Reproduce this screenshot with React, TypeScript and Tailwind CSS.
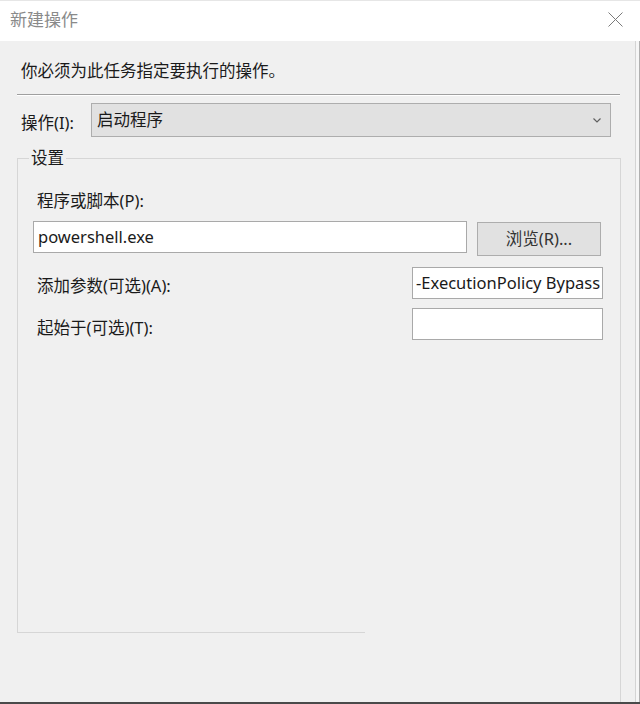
import React from "react";

const FONT = {
  fontFamily: '"Noto Sans", "Noto Sans CJK SC", sans-serif',
};

export default function App() {
  return (
    <div
      className="w-[640px] h-[704px] bg-white flex flex-col overflow-hidden text-[16.5px] text-[#1a1a1a]"
      style={FONT}
    >
      {/* Title bar */}
      <div className="h-[41px] flex items-center justify-between pl-[10px] pr-[17px] border-t border-[#e6e6e6] bg-white shrink-0">
        <span className="text-[17px] leading-[24px] text-[#8a8a8a] -mt-[3px]">新建操作</span>
        <svg width="15" height="15" viewBox="0 0 15 15" className="-mt-[4px]">
          <path d="M0.5 0.5 L14.5 14.5 M14.5 0.5 L0.5 14.5" stroke="#7a7a7a" strokeWidth="1" fill="none" />
        </svg>
      </div>

      {/* Body */}
      <div className="flex-1 flex border-b-2 border-[#4a4a4a]">
        <div className="w-[636px] bg-[#f0f0f0] border-r border-[#d4d4d4] flex flex-col">
          <div className="mt-[18px] ml-[21px] leading-[24px]">你必须为此任务指定要执行的操作。</div>
          <div className="mt-[11px] ml-[17px] w-[603px] border-t border-b border-t-[#9f9f9f] border-b-white" />

          {/* Action row */}
          <div className="mt-[7px] ml-[21px] flex items-center">
            <span className="leading-[24px] mt-[6px] w-[70px]">操作(I):</span>
            <div className="w-[520px] h-[34px] bg-[#e1e1e1] border border-[#adadad] flex items-center justify-between pl-[5px] pr-[9px]">
              <span className="leading-[24px]">启动程序</span>
              <svg width="8" height="5" viewBox="0 0 8 5">
                <path d="M0.5 0.5 L4 4 L7.5 0.5" stroke="#606060" strokeWidth="1.2" fill="none" />
              </svg>
            </div>
          </div>

          {/* Group box */}
          <div className="mt-[21px] ml-[17px] w-[604px] h-[474px] border-l border-t border-r border-[#d6d6d6] flex flex-col">
            <span className="-mt-[13px] ml-[11px] px-[2px] self-start bg-[#f0f0f0] leading-[24px]">设置</span>

            <div className="mt-[19px] ml-[19px] leading-[24px]">程序或脚本(P):</div>

            <div className="mt-[8px] ml-[15px] flex items-start gap-[10px]">
              <div className="w-[434px] h-[32px] bg-white border border-[#a9a9a9] flex items-center pl-[4px]">
                <span className="leading-[24px] -mt-[1px]">powershell.exe</span>
              </div>
              <div className="mt-[1px] w-[124px] h-[34px] bg-[#e1e1e1] border border-[#adadad] flex items-center justify-center">
                <span className="leading-[24px] text-[#333333] -mt-[1px]">浏览(R)...</span>
              </div>
            </div>

            <div className="mt-[11px] ml-[19px] w-[566px] flex items-center justify-between">
              <span className="leading-[24px] mt-[6px]">添加参数(可选)(A):</span>
              <div className="w-[191px] h-[32px] bg-white border border-[#a9a9a9] flex items-center pl-[3px] overflow-hidden whitespace-nowrap">
                <span className="leading-[24px] -mt-[1px]">-ExecutionPolicy Bypass</span>
              </div>
            </div>

            <div className="mt-[9px] ml-[19px] w-[566px] flex items-center justify-between">
              <span className="leading-[24px] mt-[7px]">起始于(可选)(T):</span>
              <div className="w-[191px] h-[32px] bg-white border border-[#a9a9a9]" />
            </div>
          </div>
          <div className="ml-[17px] w-[604px] flex-1 border-r border-[#d6d6d6]">
            <div className="w-[348px] h-px bg-[#d6d6d6]" />
          </div>
        </div>
        <div className="flex-1 bg-[#f6f6f6] border-r border-[#b0b0b0]" />
      </div>
    </div>
  );
}
